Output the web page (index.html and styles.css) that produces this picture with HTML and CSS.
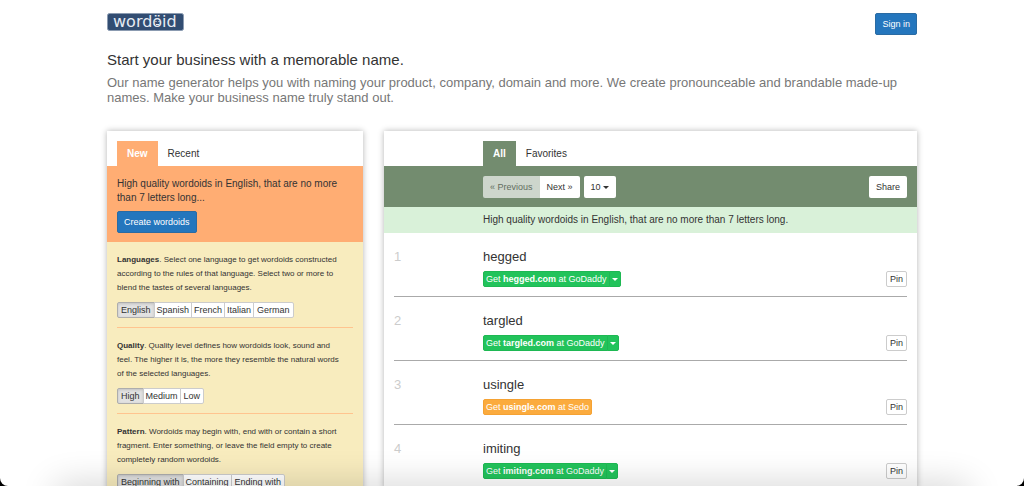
FILE: index.html
```html
<!DOCTYPE html>
<html lang="en">
<head>
<meta charset="utf-8">
<meta name="viewport" content="width=device-width, initial-scale=1">
<title>Wordoid</title>
<link rel="stylesheet" href="styles.css">
</head>
<body>
<div class="window">
  <div class="container">
    <header class="topbar">
      <a class="logo" href="#" aria-label="Wordoid home">
        <svg width="77" height="18" viewBox="0 0 77 18">
          <rect x="0.5" y="0.5" width="76" height="17" rx="2" fill="#324d72" stroke="#8b9bb1"/>
          <text class="logo-text" x="6" y="14">wordöid</text>
          <path d="M48.500 8h1v1h-1zM51.500 8h1v1h-1zM49 11h3v1h-3z" fill="#e6ebf2"/>
        </svg>
      </a>
      <button class="btn btn-primary" type="button">Sign in</button>
    </header>
    <section class="intro">
      <h1>Start your business with a memorable name.</h1>
      <p>Our name generator helps you with naming your product, company, domain and more. We create pronounceable and brandable made-up names. Make your business name truly stand out.</p>
    </section>
    <main class="columns">
      <section class="panel create">
        <nav class="tabs">
          <a class="tab tab-new active" href="#">New</a>
          <a class="tab" href="#">Recent</a>
        </nav>
        <div class="summary">
          <p>High quality wordoids in English, that are no more than 7 letters long...</p>
          <button class="btn btn-primary" type="button">Create wordoids</button>
        </div>
        <div class="options">
          <section class="option">
            <p><strong>Languages</strong>. Select one language to get wordoids constructed<br>according to the rules of that language. Select two or more to<br>blend the tastes of several languages.</p>
            <div class="group">
              <button class="btn-xs pressed" type="button">English</button>
              <button class="btn-xs" type="button">Spanish</button>
              <button class="btn-xs" type="button">French</button>
              <button class="btn-xs" type="button">Italian</button>
              <button class="btn-xs" type="button">German</button>
            </div>
          </section>
          <section class="option">
            <p><strong>Quality</strong>. Quality level defines how wordoids look, sound and<br>feel. The higher it is, the more they resemble the natural words<br>of the selected languages.</p>
            <div class="group">
              <button class="btn-xs pressed" type="button">High</button>
              <button class="btn-xs" type="button">Medium</button>
              <button class="btn-xs" type="button">Low</button>
            </div>
          </section>
          <section class="option">
            <p><strong>Pattern</strong>. Wordoids may begin with, end with or contain a short<br>fragment. Enter something, or leave the field empty to create<br>completely random wordoids.</p>
            <div class="group">
              <button class="btn-xs pressed" type="button">Beginning with</button>
              <button class="btn-xs" type="button">Containing</button>
              <button class="btn-xs" type="button">Ending with</button>
            </div>
          </section>
        </div>
      </section>
      <section class="panel results">
        <nav class="tabs indent">
          <a class="tab tab-all active" href="#">All</a>
          <a class="tab" href="#">Favorites</a>
        </nav>
        <div class="toolbar indent">
          <div class="pager">
            <button class="btn btn-light" type="button" disabled>« Previous</button>
            <button class="btn btn-light" type="button">Next »</button>
          </div>
          <button class="btn btn-light" type="button">10 <span class="caret"></span></button>
          <button class="btn btn-light share" type="button">Share</button>
        </div>
        <p class="caption indent">High quality wordoids in English, that are no more than 7 letters long.</p>
        <ol class="words">
          <li class="word">
            <span class="num">1</span>
            <div class="entry"><h2>hegged</h2>
              <div class="buy"><button class="btn-get" type="button">Get <b>hegged.com</b> at GoDaddy</button><button class="btn-get more" type="button" aria-label="More registrars"><span class="caret"></span></button></div>
            </div>
            <button class="btn-xs pin" type="button">Pin</button>
          </li>
          <li class="word">
            <span class="num">2</span>
            <div class="entry"><h2>targled</h2>
              <div class="buy"><button class="btn-get" type="button">Get <b>targled.com</b> at GoDaddy</button><button class="btn-get more" type="button" aria-label="More registrars"><span class="caret"></span></button></div>
            </div>
            <button class="btn-xs pin" type="button">Pin</button>
          </li>
          <li class="word">
            <span class="num">3</span>
            <div class="entry"><h2>usingle</h2>
              <div class="buy"><button class="btn-get sedo" type="button">Get <b>usingle.com</b> at Sedo</button></div>
            </div>
            <button class="btn-xs pin" type="button">Pin</button>
          </li>
          <li class="word">
            <span class="num">4</span>
            <div class="entry"><h2>imiting</h2>
              <div class="buy"><button class="btn-get" type="button">Get <b>imiting.com</b> at GoDaddy</button><button class="btn-get more" type="button" aria-label="More registrars"><span class="caret"></span></button></div>
            </div>
            <button class="btn-xs pin" type="button">Pin</button>
          </li>
        </ol>
      </section>
    </main>
  </div>
</div>
</body>
</html>
```
FILE: styles.css
```css
* { box-sizing: border-box; }
body { margin: 0; background: #000; font-family: "Liberation Sans", Arial, sans-serif; font-size: 10px; color: #333; }
h1, h2, p, ol { margin: 0; padding: 0; font-weight: normal; }
a { color: inherit; text-decoration: none; }
button { margin: 0; font-family: inherit; font-size: 9px; white-space: nowrap; cursor: pointer; }

.window { position: relative; height: 100vh; overflow: hidden; background: #fff; border-radius: 0 0 8px 8px; }
.window::after { content: ""; position: absolute; left: 60px; right: 60px; bottom: -24px; height: 20px; box-shadow: 0 0 36px 4px rgba(0, 0, 0, 0.2); pointer-events: none; }
.container { max-width: 810px; margin: 0 auto; }

.topbar { display: flex; justify-content: space-between; align-items: flex-start; padding-top: 13px; }
.logo, .logo svg { display: block; }
.logo-text { font-family: "DejaVu Sans", sans-serif; font-size: 16px; fill: #e6ebf2; }

.btn { display: inline-flex; align-items: center; height: 22px; padding: 0 6px; border: 1px solid transparent; border-radius: 2px; line-height: 12px; }
.btn-primary { background: #2476bd; border-color: #2a6ba3; color: #fff; }
.btn-light { background: #fff; color: #333; }

.intro { padding: 15px 0 26px; }
.intro h1 { font-size: 15px; line-height: 20px; }
.intro p { margin-top: 5px; font-size: 13px; line-height: 15px; color: #777; }

.columns { display: grid; grid-template-columns: 256fr 533fr; gap: 21px; align-items: start; }
.panel { min-width: 0; background: #fff; box-shadow: 0 0 6px rgba(0, 0, 0, 0.3); }
.tabs { display: flex; padding: 10px 10px 0; }
.tab { padding: 1px 10px 0; line-height: 24px; }
.active { color: #fff; font-weight: bold; }
.tab-new { background: #ffad73; }
.tab-all { background: #738c6f; }

.summary { padding: 11px 10px 9px; background: #ffad73; }
.summary p { line-height: 14px; margin-bottom: 6px; }
.options { padding: 11px 10px; background: #f8ecbe; }
.option { padding-bottom: 9px; margin-bottom: 11px; border-bottom: 1px solid #ffc48f; }
.option p { font-size: 8px; line-height: 14px; white-space: nowrap; }
.group { display: flex; margin-top: 7px; }
.btn-xs { height: 16px; padding: 0 3px; border: 1px solid #ccc; background: #fff; color: #333; line-height: 14px; }
.group .btn-xs { padding: 0 2px; }
.group .btn-xs + .btn-xs { margin-left: -1px; }
.group .btn-xs:first-child { padding: 0 3px; border-radius: 2px 0 0 2px; }
.group .btn-xs:last-child { padding: 0 3px; border-radius: 0 2px 2px 0; }
.group .pressed { background: #e2e2e2; border-color: #adadad; box-shadow: inset 0 1px 3px rgba(0, 0, 0, 0.15); }

.indent { padding-left: 99px; }
.toolbar { display: flex; gap: 4px; padding-top: 10px; padding-bottom: 9px; padding-right: 10px; background: #738c6f; }
.pager { display: flex; }
.pager .btn:first-child { border-radius: 2px 0 0 2px; }
.pager .btn:last-child { border-radius: 0 2px 2px 0; }
.pager .btn:disabled { background: #cdd6cc; color: #626e60; }
.share { margin-left: auto; }
.caret { display: inline-block; margin-left: 2px; border: 3px solid transparent; border-top-color: currentColor; border-bottom: 0; }
.caption { background: #d9f1d9; line-height: 26px; }

.words { list-style: none; padding: 0 10px; }
.word { display: grid; grid-template-columns: 89px 1fr auto; padding: 15px 0 9px; border-bottom: 1px solid #aaa; }
.num { font-size: 13px; line-height: 18px; color: #ccc; }
.entry h2 { font-size: 13px; line-height: 18px; margin-bottom: 5px; }
.buy { display: flex; }
.btn-get { height: 16px; padding: 0 2px; border: 1px solid #1eb853; background: #22c35b; color: #fff; line-height: 14px; border-radius: 2px; }
.btn-get:not(:last-child) { border-radius: 2px 0 0 2px; }
.more { display: flex; align-items: center; border-radius: 0 2px 2px 0; margin-left: -1px; }
.more .caret { margin: 0; }
.sedo { background: #fbab3e; border-color: #f5a233; }
.pin { align-self: end; border-radius: 2px; }
```
